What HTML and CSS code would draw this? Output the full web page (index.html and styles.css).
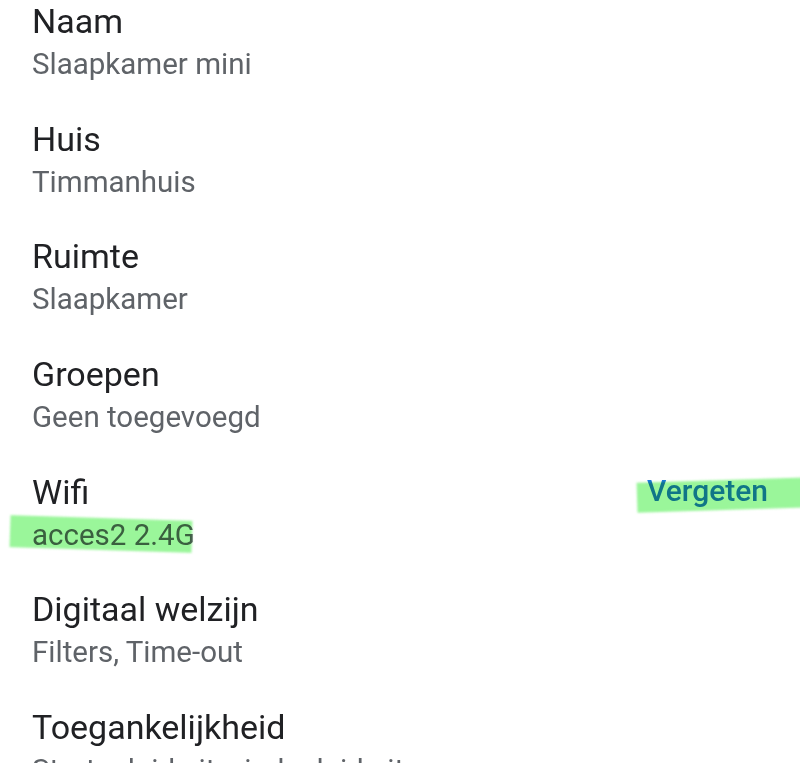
FILE: index.html
```html
<!DOCTYPE html>
<html lang="nl">
<head>
<meta charset="utf-8">
<title>Apparaatinstellingen</title>
<link rel="stylesheet" href="styles.css">
</head>
<body>
<ul class="settings">
  <li class="row">
    <div class="text"><div class="title">Naam</div><div class="sub">Slaapkamer mini</div></div>
  </li>
  <li class="row">
    <div class="text"><div class="title">Huis</div><div class="sub">Timmanhuis</div></div>
  </li>
  <li class="row">
    <div class="text"><div class="title">Ruimte</div><div class="sub">Slaapkamer</div></div>
  </li>
  <li class="row">
    <div class="text"><div class="title">Groepen</div><div class="sub">Geen toegevoegd</div></div>
  </li>
  <li class="row">
    <div class="text"><div class="title">Wifi</div><div class="sub marked">acces2 2.4G<span class="hl hl-wifi"></span></div></div>
    <div class="action">Vergeten<span class="hl hl-forget"></span></div>
  </li>
  <li class="row">
    <div class="text"><div class="title">Digitaal welzijn</div><div class="sub">Filters, Time-out</div></div>
  </li>
  <li class="row">
    <div class="text"><div class="title">Toegankelijkheid</div><div class="sub">Startgeluid uit, eindgeluid uit</div></div>
  </li>
</ul>
</body>
</html>
```

FILE: styles.css
```css
html, body {
  margin: 0;
  padding: 0;
  background: #ffffff;
  overflow: hidden;
}
body {
  font-family: Roboto, "Noto Sans", sans-serif;
  width: 800px;
  height: 763px;
}
.settings {
  list-style: none;
  margin: 0;
  padding: 1px 32px 0 32px;
}
.row {
  height: 117.7px;
  display: flex;
  align-items: flex-start;
  justify-content: space-between;
}
.title {
  font-size: 34px;
  line-height: 40px;
  color: #202124;
}
.sub {
  font-size: 29.5px;
  line-height: 47px;
  color: #5f6368;
}
.marked, .action {
  position: relative;
  display: inline-block;
}
.action {
  font-size: 30px;
  line-height: 40px;
  font-weight: 500;
  color: #1a7ae0;
  margin-top: -1px;
}
.hl {
  position: absolute;
  background: #8ff58f;
  mix-blend-mode: multiply;
  filter: blur(1.2px);
  opacity: 0.9;
  pointer-events: none;
}
.hl-wifi {
  left: -22px;
  top: 6px;
  width: 182px;
  height: 32px;
  transform: rotate(1.8deg);
}
.hl-forget {
  left: -10px;
  top: 9px;
  width: 175px;
  height: 30px;
  transform: rotate(-1.8deg);
}
```
